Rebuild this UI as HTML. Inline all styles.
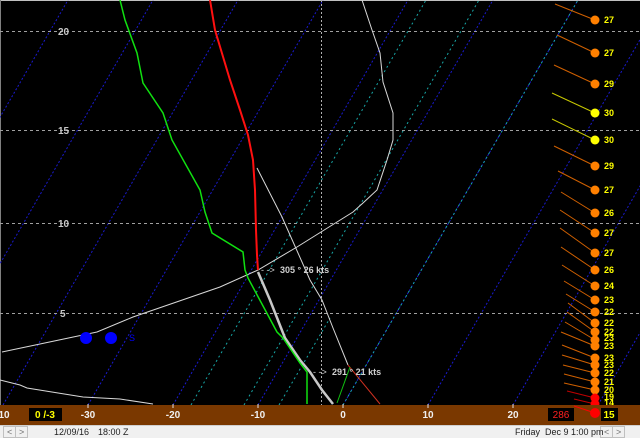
<!DOCTYPE html>
<html><head><meta charset="utf-8"><style>
body{margin:0;width:640px;height:438px;overflow:hidden;background:#000;font-family:"Liberation Sans",sans-serif}
svg{display:block}
</style></head><body>
<svg width="640" height="438" viewBox="0 0 640 438" xmlns="http://www.w3.org/2000/svg">
<rect width="640" height="405" fill="#000"/>
<line x1="0" y1="0.5" x2="640" y2="0.5" stroke="#c0c0c0"/>
<line x1="0.5" y1="0" x2="0.5" y2="405" stroke="#808080"/>
<!-- isotherms blue -->
<g stroke="#1a1ad0" stroke-width="1" stroke-dasharray="2,2" fill="none">
<line x1="-167" y1="405" x2="68" y2="0"/>
<line x1="-82" y1="405" x2="153" y2="0"/>
<line x1="3" y1="405" x2="238" y2="0"/>
<line x1="88" y1="405" x2="323" y2="0"/>
<line x1="173" y1="405" x2="408" y2="0"/>
<line x1="258" y1="405" x2="493" y2="0"/>
<line x1="343" y1="405" x2="578" y2="0"/>
<line x1="428" y1="405" x2="663" y2="0"/>
<line x1="513" y1="405" x2="748" y2="0"/>
<line x1="598" y1="405" x2="833" y2="0"/>
</g>
<g stroke="#17a8a8" stroke-width="1" stroke-dasharray="2,3" fill="none">
<line x1="191" y1="405" x2="426" y2="0"/>
<line x1="244" y1="405" x2="479" y2="0"/>
<line x1="343" y1="405" x2="578" y2="0"/>
<line x1="279" y1="405" x2="330" y2="318"/>
</g>
<!-- horizontal -->
<g stroke="#a0a0a0" stroke-dasharray="3,3">
<line x1="0" y1="31.5" x2="640" y2="31.5"/>
<line x1="0" y1="130.5" x2="640" y2="130.5"/>
<line x1="0" y1="223.5" x2="640" y2="223.5"/>
<line x1="0" y1="313.5" x2="640" y2="313.5"/>
</g>
<line x1="321.5" y1="0" x2="321.5" y2="405" stroke="#b0b0b0" stroke-dasharray="2,2"/>
<g font-size="10" font-weight="bold" fill="#c8c8c8">
<text x="58" y="35">20</text><text x="58" y="134">15</text><text x="58" y="227">10</text><text x="60" y="317">5</text>
</g>
<!-- white thin curves -->
<g fill="none" stroke="#d8d8d8" stroke-width="1">
<polyline points="362,0 372,30 380,53 383,82 393,113 393,140 387,160 377,190 363,203 353,212 297,247 258,270 220,287 133,317 97,332 2,352"/>
<polyline points="257,168 282,217 310,280 322,300 333,328 348,365"/>
<polyline points="0,380 20,385 27,388 83,397 120,399 153,404"/>
</g>
<polyline points="348,365 380,404" fill="none" stroke="#d03020" stroke-width="1"/>
<polyline points="210,0 215,30 230,80 240,110 248,135 253,160 255,190 256,230 257,255 258,270" fill="none" stroke="#ff1010" stroke-width="2"/>
<polyline points="258,272 270,300 285,338 300,360 310,372 322,390 333,404" fill="none" stroke="#c8c8c8" stroke-width="2.5"/>
<polyline points="120,0 125,20 137,53 143,83 163,113 172,140 200,190 205,212 212,233 243,252 245,270 248,278 277,332 283,338 300,363 307,372 307,404" fill="none" stroke="#10e010" stroke-width="1.5"/>
<polyline points="350,367 337,403" fill="none" stroke="#10c010" stroke-width="1"/>
<g font-size="9" font-weight="bold" fill="#d0d0d0">
<text x="261" y="273" font-weight="normal">- -&gt;</text><text x="280" y="273">305 ° 26 kts</text>
<text x="313" y="375" font-weight="normal">- -&gt;</text><text x="332" y="375">291 ° 21 kts</text>
</g>
<circle cx="86" cy="338" r="6" fill="#0000ff"/><circle cx="111" cy="338" r="6" fill="#0000ff"/>
<text x="129" y="341" font-size="9" fill="#0000ff">S</text>
<!-- wind barbs -->
<g stroke-width="1">
<line x1="555" y1="4" x2="595" y2="20" stroke="#d06000"/>
<line x1="557" y1="35" x2="595" y2="53" stroke="#d06000"/>
<line x1="554" y1="65" x2="595" y2="84" stroke="#d06000"/>
<line x1="552" y1="93" x2="595" y2="113" stroke="#c8c800"/>
<line x1="552" y1="119" x2="595" y2="140" stroke="#c8c800"/>
<line x1="554" y1="146" x2="595" y2="166" stroke="#d06000"/>
<line x1="558" y1="171" x2="595" y2="190" stroke="#d06000"/>
<line x1="561" y1="192" x2="595" y2="213" stroke="#d06000"/>
<line x1="560" y1="210" x2="595" y2="233" stroke="#d06000"/>
<line x1="560" y1="228" x2="595" y2="253" stroke="#d06000"/>
<line x1="561" y1="247" x2="595" y2="270" stroke="#d06000"/>
<line x1="562" y1="265" x2="595" y2="286" stroke="#d06000"/>
<line x1="564" y1="281" x2="595" y2="300" stroke="#d06000"/>
<line x1="566" y1="294" x2="595" y2="312" stroke="#d06000"/>
<line x1="568" y1="303" x2="595" y2="323" stroke="#d06000"/>
<line x1="567" y1="312" x2="595" y2="332" stroke="#d06000"/>
<line x1="565" y1="322" x2="595" y2="340" stroke="#d06000"/>
<line x1="561" y1="332" x2="595" y2="346" stroke="#d06000"/>
<line x1="562" y1="345" x2="595" y2="358" stroke="#d06000"/>
<line x1="562" y1="355" x2="595" y2="365" stroke="#d06000"/>
<line x1="563" y1="365" x2="595" y2="373" stroke="#d06000"/>
<line x1="564" y1="374" x2="595" y2="382" stroke="#d06000"/>
<line x1="564" y1="383" x2="595" y2="390" stroke="#d06000"/>
<line x1="567" y1="391" x2="595" y2="398" stroke="#c00000"/>
<line x1="574" y1="399" x2="595" y2="404" stroke="#c00000"/>
</g>
<g fill="#ff8000">
<circle cx="595" cy="20" r="4.5"/><circle cx="595" cy="53" r="4.5"/><circle cx="595" cy="84" r="4.5"/>
<circle cx="595" cy="166" r="4.5"/><circle cx="595" cy="190" r="4.5"/><circle cx="595" cy="213" r="4.5"/>
<circle cx="595" cy="233" r="4.5"/><circle cx="595" cy="253" r="4.5"/><circle cx="595" cy="270" r="4.5"/>
<circle cx="595" cy="286" r="4.5"/><circle cx="595" cy="300" r="4.5"/><circle cx="595" cy="312" r="4.5"/>
<circle cx="595" cy="323" r="4.5"/><circle cx="595" cy="332" r="4.5"/><circle cx="595" cy="340" r="4.5"/>
<circle cx="595" cy="346" r="4.5"/><circle cx="595" cy="358" r="4.5"/><circle cx="595" cy="365" r="4.5"/>
<circle cx="595" cy="373" r="4.5"/><circle cx="595" cy="382" r="4.5"/><circle cx="595" cy="390" r="4.5"/>
</g>
<circle cx="595" cy="113" r="4.5" fill="#ffff00"/><circle cx="595" cy="140" r="4.5" fill="#ffff00"/>
<circle cx="595" cy="398" r="4.5" fill="#ff0000"/><circle cx="595" cy="404" r="4.5" fill="#ff0000"/>
<g font-size="9" font-weight="bold" fill="#ffff00">
<text x="604" y="23">27</text><text x="604" y="56">27</text><text x="604" y="87">29</text>
<text x="604" y="116">30</text><text x="604" y="143">30</text><text x="604" y="169">29</text>
<text x="604" y="193">27</text><text x="604" y="216">26</text><text x="604" y="236">27</text>
<text x="604" y="256">27</text><text x="604" y="273">26</text><text x="604" y="289">24</text>
<text x="604" y="303">23</text><text x="604" y="315">22</text><text x="604" y="326">22</text>
<text x="604" y="335">22</text><text x="604" y="341">23</text><text x="604" y="349">23</text>
<text x="604" y="361">23</text><text x="604" y="368">23</text><text x="604" y="376">22</text>
<text x="604" y="385">21</text><text x="604" y="393">20</text><text x="604" y="400">19</text>
<text x="604" y="406">14</text>
</g>
<!-- brown axis bar -->
<rect x="0" y="405" width="640" height="20" fill="#7a3800"/>
<g stroke="#e0e0e0"><line x1="88" y1="404" x2="88" y2="408"/><line x1="173" y1="404" x2="173" y2="408"/><line x1="258" y1="404" x2="258" y2="408"/><line x1="343" y1="404" x2="343" y2="408"/><line x1="428" y1="404" x2="428" y2="408"/><line x1="513" y1="404" x2="513" y2="408"/></g>
<g font-size="10" font-weight="bold" fill="#f0f0f0" text-anchor="middle">
<text x="4" y="418">10</text><text x="88" y="418">-30</text><text x="173" y="418">-20</text><text x="258" y="418">-10</text><text x="343" y="418">0</text><text x="428" y="418">10</text><text x="513" y="418">20</text>
</g>
<rect x="29" y="408" width="33" height="13" fill="#000"/>
<text x="45" y="418" font-size="10" font-weight="bold" fill="#ffff00" text-anchor="middle">0 /-3</text>
<rect x="548" y="408" width="26" height="13" fill="#000"/>
<text x="561" y="418" font-size="10" fill="#ff2020" text-anchor="middle">286</text>
<line x1="574" y1="406" x2="595" y2="413" stroke="#ff0000"/>
<circle cx="595" cy="413" r="5" fill="#ff0000"/>
<rect x="601" y="408" width="17" height="13" fill="#000"/>
<text x="609" y="418" font-size="10" font-weight="bold" fill="#ffff00" text-anchor="middle">15</text>
<!-- status bar -->
<rect x="0" y="425" width="640" height="13" fill="#f0f0f0"/>
<line x1="0" y1="425.5" x2="640" y2="425.5" stroke="#d0d0d0"/>
<rect x="3.5" y="426.5" width="12" height="11" fill="#f0f0f0" stroke="#c0c0c0"/>
<rect x="15.5" y="426.5" width="12" height="11" fill="#f0f0f0" stroke="#c0c0c0"/>
<rect x="600.5" y="426.5" width="12" height="11" fill="#f0f0f0" stroke="#c0c0c0"/>
<rect x="612.5" y="426.5" width="12" height="11" fill="#f0f0f0" stroke="#c0c0c0"/>
<g font-size="9" fill="#707070">
<text x="7" y="435">&lt;</text><text x="19" y="435">&gt;</text><text x="604" y="435">&lt;</text><text x="616" y="435">&gt;</text>
</g>
<g font-size="9" fill="#202020">
<text x="54" y="435">12/09/16</text><text x="98" y="435">18:00 Z</text>
<text x="515" y="435">Friday</text><text x="545" y="435">Dec 9  1:00 pm</text>
</g>
</svg>
</body></html>
